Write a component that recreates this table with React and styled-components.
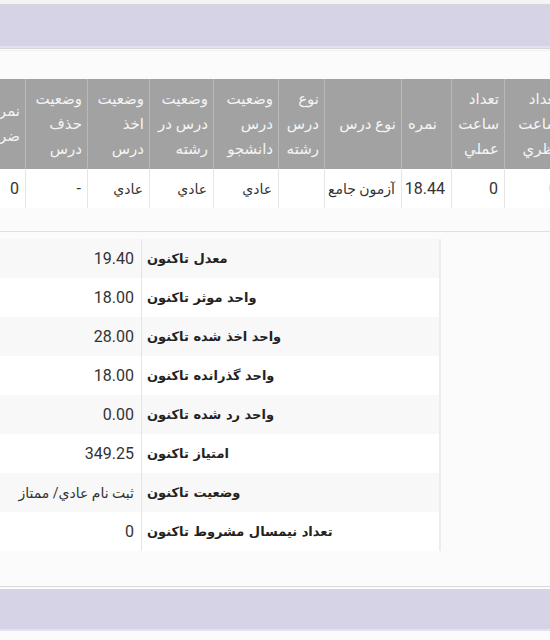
import React from 'react';
import styled, { createGlobalStyle } from 'styled-components';

const GlobalStyle = createGlobalStyle`
    body {
        margin: 0;
        background: #fbfbfb;
        font-family: Roboto, "DejaVu Sans", sans-serif;
    }
`;

const Page = styled.div`
    width: 550px;
    height: 640px;
    overflow: hidden;
    display: flex;
    flex-direction: column;
    background: #fbfbfb;
`;

const TopStrip = styled.div`
    height: 4px;
    background: #f4f4f4;
    border-bottom: 1px solid #d8d8d8;
`;

const Band = styled.div`
    height: ${props => props.h}px;
    background: #d6d3e6;
    border-bottom: 2px solid #e3e1ee;
    box-shadow: 0 1px 0 #d4d4d4;
    flex-shrink: 0;
`;

const CoursePanel = styled.div`
    padding: 28px 0 23px;
    border-bottom: 1px solid #e0e0e0;
    border-top: 1px solid #f0f0f0;
    margin-top: 2px;
`;

const Scroller = styled.div`
    direction: rtl;
    overflow: hidden;
`;

// table is wider than the screen, cut on both sides
const Grid = styled.div`
    display: grid;
    grid-template-columns: 60px 53px 50px 77px 46px 65px 64px 62px 62px 60px;
    width: max-content;
    margin-right: -14px;
`;

const HeadCell = styled.div`
    height: 90px;
    box-sizing: border-box;
    background: #a2a2a2;
    color: #f4f4f4;
    border-left: 1px solid #b9b9b9;
    font-size: 15px;
    line-height: 25px;
    display: flex;
    align-items: center;
    padding-right: ${props => props.pad || 5}px;
    white-space: pre-line;
`;

const DataCell = styled.div`
    height: 39px;
    box-sizing: border-box;
    background: #fff;
    color: #333;
    border-left: 1px solid #e6e6e6;
    font-size: ${props => (props.ar ? 14 : 16)}px;
    white-space: nowrap;
    display: flex;
    align-items: center;
    padding-right: 6px;
`;

const SummaryPanel = styled.div`
    padding: 7px 109px 35px 0;
    border-bottom: 1px solid #d9d9d9;
    margin-bottom: 2px;
    direction: rtl;
    overflow: hidden;
`;

const SummaryTable = styled.div`
    display: grid;
    grid-template-columns: 298px 160px;
    width: max-content;
    border-right: 2px solid #ececec;
`;

const Label = styled.div`
    height: 39px;
    box-sizing: border-box;
    background: ${props => (props.odd ? '#f8f8f8' : '#fff')};
    border-left: 1px solid #e4e4e4;
    display: flex;
    align-items: center;
    justify-content: flex-end;
    padding-left: 5px;
    font-family: "DejaVu Sans", sans-serif;
    font-weight: bold;
    font-size: 13px;
    color: #222;
`;

const Value = styled.div`
    height: 39px;
    box-sizing: border-box;
    background: ${props => (props.odd ? '#f8f8f8' : '#fff')};
    display: flex;
    align-items: center;
    padding-right: 7px;
    font-size: ${props => (props.ar ? 14 : 16)}px;
    white-space: nowrap;
    color: #333;
`;

const Rest = styled.div`
    flex: 1;
    background: #fbfbfb;
`;

const columns = [
    { head: 'تعداد\nساعت\nنظري', value: '0' },
    { head: 'تعداد\nساعت\nعملي', value: '0' },
    { head: 'نمره', value: '18.44', pad: 14 },
    { head: 'نوع درس', value: 'آزمون جامع', ar: true },
    { head: 'نوع\nدرس\nرشته', value: '' },
    { head: 'وضعيت\nدرس\nدانشجو', value: 'عادي', ar: true },
    { head: 'وضعيت\nدرس در\nرشته', value: 'عادي', ar: true },
    { head: 'وضعيت\nاخذ\nدرس', value: 'عادي', ar: true },
    { head: 'وضعيت\nحذف\nدرس', value: '-' },
    { head: 'نمره\nضريب', value: '0' },
];

const summary = [
    { label: 'معدل تاكنون', value: '19.40' },
    { label: 'واحد موثر تاكنون', value: '18.00' },
    { label: 'واحد اخذ شده تاكنون', value: '28.00' },
    { label: 'واحد گذرانده تاكنون', value: '18.00' },
    { label: 'واحد رد شده تاكنون', value: '0.00' },
    { label: 'امتياز تاكنون', value: '349.25' },
    { label: 'وضعيت تاكنون', value: 'ثبت نام عادي/ ممتاز', ar: true },
    { label: 'تعداد نيمسال مشروط تاكنون', value: '0' },
];

export default function App() {
    return (
        <Page>
            <GlobalStyle />
            <TopStrip />
            <Band h={41} />
            <CoursePanel>
                <Scroller>
                    <Grid>
                        {columns.map((c, i) => (
                            <HeadCell key={'h' + i} pad={c.pad}>{c.head}</HeadCell>
                        ))}
                        {columns.map((c, i) => (
                            <DataCell key={'d' + i} ar={c.ar}>{c.value}</DataCell>
                        ))}
                    </Grid>
                </Scroller>
            </CoursePanel>
            <SummaryPanel>
                <SummaryTable>
                    {summary.map((row, i) => (
                        <React.Fragment key={i}>
                            <Label odd={i % 2 === 0}>{row.label}</Label>
                            <Value odd={i % 2 === 0} ar={row.ar}>{row.value}</Value>
                        </React.Fragment>
                    ))}
                </SummaryTable>
            </SummaryPanel>
            <Band h={40} />
            <Rest />
        </Page>
    );
}
